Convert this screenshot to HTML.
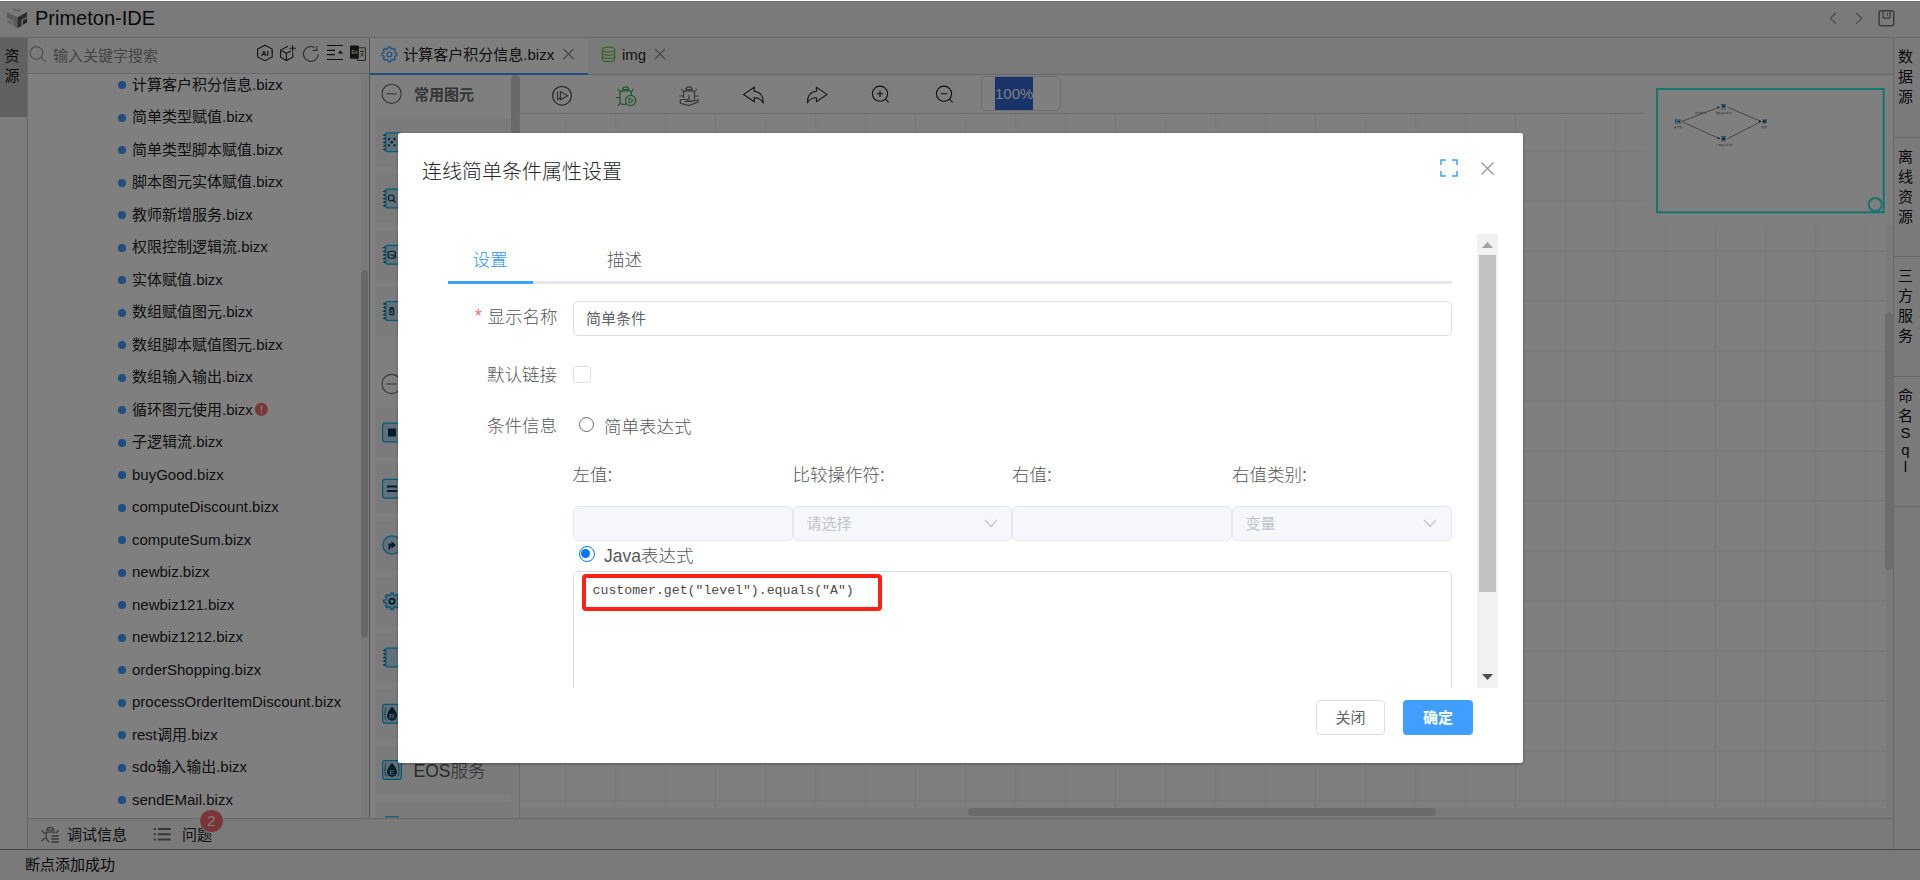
<!DOCTYPE html>
<html lang="zh-CN">
<head>
<meta charset="utf-8">
<title>Primeton-IDE</title>
<style>
*{box-sizing:border-box;margin:0;padding:0}
html,body{width:1920px;height:880px;overflow:hidden;background:#fff}
body{font-family:"Liberation Sans","Noto Sans CJK SC",sans-serif;color:#1a1a1a;position:relative;font-size:15px}
.abs{position:absolute}
svg{display:block;overflow:visible}
/* ---------- app shell ---------- */
#app{position:absolute;left:0;top:0;width:1920px;height:880px;background:#fff}
#hdr{left:0;top:1px;width:1920px;height:37px;background:#f5f5f5;border-top:1px solid #d6d6d6;border-bottom:1px solid #d2d2d2}
#hdr .ttl{left:35px;top:2.3px;font-size:20px;line-height:28px;color:#111;white-space:nowrap}
#lstrip{left:0;top:38px;width:28px;height:811px;background:#f8f8f8;border-right:1px solid #d0d0d0}
#lstrip .act{left:0;top:0;width:27px;height:79px;background:#c2c2c2}
.vtxt{width:24px;text-align:center;font-size:15px;line-height:20px;color:#111}
#rstrip{left:1893px;top:38px;width:27px;height:811px;background:#f5f5f5;border-left:1px solid #d0d0d0}
#rstrip .sec{position:relative;width:26px;padding:9px 0 29.500px 0;border-bottom:1px solid #d0d0d0}
#rstrip .sec div{padding-right:3px;height:20px;line-height:20px;text-align:center;font-size:15px;color:#111}
#rstrip .sec div.l{height:17px;line-height:17px}
/* left panel */
#lp{left:28px;top:38px;width:342px;height:780px;background:#fff;border-right:1px solid #aeaeae;overflow:hidden}
#srch{left:0;top:0;width:341px;height:36px;background:#f7f7f7;border-bottom:1px solid #d0d0d0}
#srch .ph{left:25px;top:7.7px;font-size:15px;line-height:20px;color:#8a8a8a;white-space:nowrap}
.ti{position:absolute;left:0;width:333px;height:32.5px;white-space:nowrap}
.ti i{position:absolute;left:90px;top:12.700px;width:7.600px;height:7.600px;border-radius:50%;background:#409eff}
.ti span{position:absolute;left:104px;top:5px;font-size:15px;line-height:22px;color:#222}
#tsb{left:333px;top:36px;width:8px;height:744px;background:#f4f4f4}
#tsb b{position:absolute;left:0.200px;top:196px;width:7.300px;height:368px;border-radius:3.500px;background:#d0d0d0}
/* tab bar */
#tabs{left:370px;top:38px;width:1523px;height:37px;background:#f5f5f5;border-bottom:1px solid #d0d0d0}
#tabs .t1{left:0;top:0;width:218px;height:36.500px;background:#fff;border-bottom:2.500px solid #409eff}
#tabs .lbl{font-size:15px;line-height:20px;color:#222;white-space:nowrap}
/* palette */
#pal{left:370px;top:75px;width:150px;height:743px;background:#fff;overflow:hidden}
.ph2{position:absolute;left:44px;font-size:15px;font-weight:bold;color:#6a6a6a;line-height:20px;white-space:nowrap}
.card{position:absolute;left:5.800px;width:135.200px;height:49px;background:#f6f6f6}
.card .nm{position:absolute;left:37.700px;top:13px;font-size:17.5px;line-height:24px;color:#505256;white-space:nowrap;font-weight:300}
#psb{left:141px;top:0;width:9px;height:743px;background:#f6f6f6}
#psb b{position:absolute;left:0;top:0;width:9px;height:480px;border-radius:4.5px;background:#d2d2d2}
/* canvas */
#tb{left:520px;top:75px;width:1373px;height:39px;background:#fff;border-bottom:1px solid #d8d8d8}
#cv{left:520px;top:114px;width:1373px;height:704px;background-color:#fff;
 background-image:linear-gradient(to right,#f5f5f5 2px,transparent 2px),linear-gradient(to bottom,#f5f5f5 2px,transparent 2px);
 background-size:50px 50px;background-position:44.500px 36px}
#zoom{left:461px;top:1px;width:80px;height:35px;border:1px solid #dcdfe6;border-radius:5px;background:#fff}
#zoom span{position:absolute;left:13px;top:0;width:38px;height:33px;background:#3367d6;color:#fff;font-size:15px;line-height:33px;white-space:nowrap;overflow:hidden}
/* bottom */
#bbar{left:28px;top:818px;width:1865px;height:31px;background:#f5f5f5;border-top:1px solid #d0d0d0}
#sbar{left:0;top:849px;width:1920px;height:31px;background:#f4f4f4;border-top:1px solid #8c8c8c}
#sbar span{position:absolute;left:25px;top:5px;font-size:15px;line-height:20px;color:#111}
#bbar .lb{position:absolute;top:6px;font-size:15px;line-height:20px;color:#222;white-space:nowrap}
#badge{left:170.750px;top:-10.150px;width:25.500px;height:23.800px;border-radius:12px;background:#f56c6c;border:1.250px solid #fff;color:#fff;font-size:15px;line-height:21.300px;text-align:center}
/* mask & modal */
#mask{left:0;top:0;width:1920px;height:880px;background:rgba(0,0,0,.5)}
#dlg{left:398px;top:132.800px;width:1125.200px;height:630px;background:#fff;border-radius:2px;box-shadow:0 1px 3px rgba(0,0,0,.35)}
#dlg .title{left:24px;top:24px;font-size:20px;line-height:28px;color:#26282b;white-space:nowrap;font-weight:300}
.flabel{position:absolute;font-size:17.5px;line-height:24px;color:#55575b;white-space:nowrap;font-weight:300}
.inp{position:absolute;border:1px solid #dcdfe6;border-radius:5px;background:#fff}
.dis{background:#f5f7fa;border-color:#e4e7ed}
</style>
</head>
<body>

<div id="app">
<!-- HEADER -->
<div id="hdr" class="abs">
    <div class="ttl abs">Primeton-IDE</div>
</div>
<!-- LEFT STRIP -->
<div id="lstrip" class="abs">
  <div class="act abs"></div>
  <div class="vtxt abs" style="left:0;top:8px">资<br>源</div>
</div>
<!-- LEFT PANEL -->
<div id="lp" class="abs">
  <div id="srch" class="abs"><div class="ph abs">输入关键字搜索</div></div>
  <div id="tree">
<div class="ti" style="top:30.75px"><i></i><span>计算客户积分信息.bizx</span></div>
<div class="ti" style="top:63.25px"><i></i><span>简单类型赋值.bizx</span></div>
<div class="ti" style="top:95.75px"><i></i><span>简单类型脚本赋值.bizx</span></div>
<div class="ti" style="top:128.25px"><i></i><span>脚本图元实体赋值.bizx</span></div>
<div class="ti" style="top:160.75px"><i></i><span>教师新增服务.bizx</span></div>
<div class="ti" style="top:193.25px"><i></i><span>权限控制逻辑流.bizx</span></div>
<div class="ti" style="top:225.75px"><i></i><span>实体赋值.bizx</span></div>
<div class="ti" style="top:258.25px"><i></i><span>数组赋值图元.bizx</span></div>
<div class="ti" style="top:290.75px"><i></i><span>数组脚本赋值图元.bizx</span></div>
<div class="ti" style="top:323.25px"><i></i><span>数组输入输出.bizx</span></div>
<div class="ti" style="top:355.75px"><i></i><span>循环图元使用.bizx</span></div>
<div class="ti" style="top:388.25px"><i></i><span>子逻辑流.bizx</span></div>
<div class="ti" style="top:420.75px"><i></i><span>buyGood.bizx</span></div>
<div class="ti" style="top:453.25px"><i></i><span>computeDiscount.bizx</span></div>
<div class="ti" style="top:485.75px"><i></i><span>computeSum.bizx</span></div>
<div class="ti" style="top:518.25px"><i></i><span>newbiz.bizx</span></div>
<div class="ti" style="top:550.75px"><i></i><span>newbiz121.bizx</span></div>
<div class="ti" style="top:583.25px"><i></i><span>newbiz1212.bizx</span></div>
<div class="ti" style="top:615.75px"><i></i><span>orderShopping.bizx</span></div>
<div class="ti" style="top:648.25px"><i></i><span>processOrderItemDiscount.bizx</span></div>
<div class="ti" style="top:680.75px"><i></i><span>rest调用.bizx</span></div>
<div class="ti" style="top:713.25px"><i></i><span>sdo输入输出.bizx</span></div>
<div class="ti" style="top:745.75px"><i></i><span>sendEMail.bizx</span></div>
</div>
  <div id="tsb" class="abs"><b></b></div>
</div>
<!-- TABS -->
<div id="tabs" class="abs">
  <div class="t1 abs"></div>
  <div class="lbl abs" style="left:33.300px;top:7px">计算客户积分信息.bizx</div>
  <div class="lbl abs" style="left:252px;top:7px">img</div>
</div>
<!-- PALETTE -->
<div id="pal" class="abs">
  <div class="ph2" style="top:10px">常用图元</div>
  <div class="ph2" style="top:299px">基础图元</div>
  <div id="cards">
<div class="card" style="top:43.00px"><span class="nm">命名SQL</span></div>
<div class="card" style="top:99.25px"><span class="nm">查询实体</span></div>
<div class="card" style="top:155.50px"><span class="nm">保存实体</span></div>
<div class="card" style="top:211.75px"><span class="nm">删除实体</span></div>
<div class="card" style="top:333.00px"><span class="nm">开始</span></div>
<div class="card" style="top:389.25px"><span class="nm">结束</span></div>
<div class="card" style="top:445.50px"><span class="nm">循环</span></div>
<div class="card" style="top:501.75px"><span class="nm">运算逻辑</span></div>
<div class="card" style="top:558.00px"><span class="nm">逻辑流</span></div>
<div class="card" style="top:614.25px"><span class="nm">Restful服务</span></div>
<div class="card" style="top:670.50px"><span class="nm">EOS服务</span></div>
<div class="card" style="top:726.75px"><span class="nm">WebService</span></div>
</div>
  <div id="psb" class="abs"><b></b></div>
</div>
<!-- TOOLBAR + CANVAS -->
<div id="tb" class="abs">
  <div id="zoom" class="abs"><span>100%</span></div>
</div>
<div class="abs" style="left:519px;top:114px;width:1px;height:704px;background:#d9d9d9"></div>
<div id="cv" class="abs"><div class="abs" style="left:0;top:694px;width:1373px;height:10px;background:#f4f4f4"></div><div class="abs" style="left:1365.500px;top:0;width:7.500px;height:704px;background:#f4f4f4"></div><div class="abs" style="left:448px;top:694px;width:468px;height:8px;border-radius:4px;background:#d6d6d6"></div><div class="abs" style="left:1365px;top:198px;width:8px;height:258px;border-radius:4px;background:#dadada"></div></div>
<!-- RIGHT STRIP -->
<div id="rstrip" class="abs">
  <div class="sec"><div>数</div><div>据</div><div>源</div></div>
  <div class="sec"><div>离</div><div>线</div><div>资</div><div>源</div></div>
  <div class="sec"><div>三</div><div>方</div><div>服</div><div>务</div></div>
  <div class="sec"><div>命</div><div>名</div><div class="l" style="margin-top:-2px">S</div><div class="l">q</div><div class="l" style="margin-bottom:2px">l</div></div>
</div>
<!-- BOTTOM -->
<div id="bbar" class="abs">
  <div class="lb" style="left:39px">调试信息</div>
  <div class="lb" style="left:154px">问题</div>
  <div id="badge" class="abs">2</div>
</div>
<div id="sbar" class="abs"><span>断点添加成功</span></div>
<svg class="abs" style="left:0;top:0;pointer-events:none" width="1920" height="880" viewBox="0 0 1920 880" fill="none" stroke-linecap="butt">
<!-- logo -->
<g stroke="none">
<polygon points="7,12.2 17.5,17.2 17.5,28.3 13.3,26 13.3,21 7,17.8" fill="#b6b6b6"/>
<polygon points="7.2,19.2 12.3,21.7 12.3,25.3 7.2,22.8" fill="#cfcfcf"/>
<polygon points="17.5,17.2 27,12 27,17 21.5,20 21.5,26 17.5,28.3" fill="#565656"/>
<polygon points="22.8,20.6 27,18.3 27,22.6 22.8,24.9" fill="#4a4a4a"/>
<polyline points="13,8.6 17.3,11 20.8,9" fill="none" stroke="#bdbdbd" stroke-width="1.6"/>
</g>
<!-- search -->
<g stroke="#9a9a9a" stroke-width="1.1"><circle cx="36.4" cy="52.9" r="6.3"/><path d="M40.9 57.4L45.8 61.8"/></g>
<!-- AI hexagon -->
<g stroke="#2a2a2a" stroke-width="1.1"><path d="M264.9 45.2L272.2 49.1V56.9L264.9 60.7L257.6 56.9V49.1Z" stroke-dasharray="none"/>
<path d="M271 51.5l1.2 1.6 1.2-1.6zM256.4 54.3l1.2-1.6 1.2 1.6z" fill="#2a2a2a" stroke="none"/></g>
<text x="264.9" y="55.8" text-anchor="middle" font-family="Liberation Sans,sans-serif" font-weight="bold" font-size="7.6" fill="#2a2a2a" stroke="none">AI</text>
<!-- cube plus -->
<g stroke="#2a2a2a" stroke-width="1.1"><path d="M288 46.2L280.6 50V57.2L286.4 60.5L292.8 57.2V52.5M280.6 50L286.4 53.3L291 51M286.4 53.3V60.5"/><path d="M292.6 45.2V51.4M289.4 48.3H295.9"/></g>
<!-- refresh -->
<g stroke="#555" stroke-width="1.1"><path d="M318.2 54A7.4 7.4 0 1 1 314.6 47.6"/><path d="M316.8 46.2V50.4H312.8"/></g>
<!-- collapse lines -->
<g stroke="#1e1e1e" stroke-width="1.2"><path d="M327 45.5H343M327 50.3H335M327 54.6H335M327 59.5H343"/><path d="M337.8 53.6L340.5 50.4L343.2 53.6Z" fill="#1e1e1e" stroke="none"/></g>
<!-- translate -->
<g><rect x="350" y="45.5" width="8.8" height="13.2" rx="1" fill="#262626"/><rect x="357.7" y="47.8" width="7.6" height="12.7" stroke="#3a3a3a" stroke-width="0.9"/><path d="M360 51.5h4M362 50.3v1.2M360.6 56.5l2.6-4M361 53l2.6 3.4" stroke="#3a3a3a" stroke-width="0.8"/>
<text x="354.4" y="54" text-anchor="middle" font-family="Liberation Sans,sans-serif" font-weight="bold" font-size="4.6" fill="#e8e8e8" stroke="none">En</text></g>
</svg>
<svg class="abs" style="left:0;top:0;pointer-events:none" width="1920" height="880" viewBox="0 0 1920 880" fill="none">
<!-- tab gear -->
<g stroke="#409eff" stroke-width="1.2" stroke-linejoin="round"><path d="M387.98 48.67L388.15 46.90L390.65 46.90L390.82 48.67L392.44 49.35L393.82 48.22L395.58 49.98L394.45 51.36L395.13 52.98L396.90 53.15L396.90 55.65L395.13 55.82L394.45 57.44L395.58 58.82L393.82 60.58L392.44 59.45L390.82 60.13L390.65 61.90L388.15 61.90L387.98 60.13L386.36 59.45L384.98 60.58L383.22 58.82L384.35 57.44L383.67 55.82L381.90 55.65L381.90 53.15L383.67 52.98L384.35 51.36L383.22 49.98L384.98 48.22L386.36 49.35Z"/><circle cx="389.4" cy="54.4" r="2.4"/></g>
<!-- tab close -->
<path d="M563.5 49l10 10M573.5 49l-10 10" stroke="#8a8c92" stroke-width="1.1"/>
<path d="M655 49l10 10M665 49l-10 10" stroke="#8a8c92" stroke-width="1.1"/>
<!-- db icon -->
<g stroke="#72cc46" stroke-width="1.2"><ellipse cx="608.5" cy="49.6" rx="6.2" ry="2.5"/><path d="M602.3 49.6V59.2C602.3 60.6 605 61.7 608.5 61.7S614.7 60.6 614.7 59.2V49.6"/><path d="M602.3 52.8C602.3 54.2 605 55.3 608.5 55.3S614.7 54.2 614.7 52.8M602.3 56C602.3 57.4 605 58.5 608.5 58.5S614.7 57.4 614.7 56"/></g>
<!-- header right -->
<path d="M1835.8 13L1830.4 18.35L1835.8 23.7M1856.1 13L1861.9 18.35L1856.1 23.7" stroke="#8c8c8c" stroke-width="1.1"/>
<g stroke="#767676" stroke-width="1.5"><rect x="1879.1" y="10.8" width="14.7" height="15" rx="2"/><path d="M1883 11V16.2A2 2 0 0 0 1885 18.2H1888A2 2 0 0 0 1890 16.2V11" stroke-width="1.3"/><path d="M1887.4 12.8V15.8" stroke-width="1"/></g>
<!-- palette heading minus -->
<g stroke="#6a6a6a" stroke-width="1.1"><circle cx="391.6" cy="93.8" r="9.6"/><path d="M386.5 93.8H396.7"/><circle cx="391.6" cy="384" r="9.6"/><path d="M386.5 384H396.7"/></g>
<!-- toolbar: ff -->
<g stroke="#5a5a5a" stroke-width="1.3"><circle cx="562" cy="95.7" r="9.4"/><path d="M557.6 91.8V99.6L560.2 97.8M560.4 91.6V99.8L567.6 95.7Z" stroke-width="1.1"/></g>
<!-- green bug -->
<g stroke="#40b054" stroke-width="1.2"><path d="M622.6 89.6A3.2 3.2 0 0 1 628.9 89.6Z"/><path d="M626 104.4H622.5A2.5 2.5 0 0 1 620 101.9V93.4A2.5 2.5 0 0 1 622.500 90.900H629A2.500 2.500 0 0 1 631.500 93.400V95"/><path d="M616 97.600H620M617.800 89L620.300 92M633.600 89L631.300 92M617.800 105.800L620.800 102.300"/><circle cx="630.6" cy="100.500" r="5.1"/><path d="M629 98V103L633.300 100.500Z" stroke-width="1"/></g>
<!-- gray bug hand -->
<g stroke="#6c6c6c" stroke-width="1.2"><path d="M685.800 89.600A3.200 3.200 0 0 1 692.100 89.600Z"/><path d="M683.500 98V93.400A2.500 2.500 0 0 1 686 90.900H692A2.500 2.500 0 0 1 694.500 93.400V99.500"/><path d="M679.300 96H683.300M694.700 96H698.700M681.300 89L683.700 92M696.800 89L694.500 92"/><path d="M689 95V101.500H684.500M680.300 99.500H687.500V101.500M680.300 99.500V103.300L688.800 105.600L698 102V100L689.500 101.600"/></g>
<!-- undo / redo -->
<path d="M743.6 94.4L754.2 87.3V91.300C760 91.800 763.400 96 763.200 103.200C761.500 99.500 758.500 97.800 754.200 97.800V101.600Z" stroke="#1c1c1c" stroke-width="1.1" stroke-linejoin="miter"/>
<path transform="translate(1570.600 0) scale(-1 1)" d="M743.6 94.4L754.2 87.3V91.300C760 91.800 763.400 96 763.200 103.200C761.500 99.500 758.500 97.800 754.200 97.800V101.600Z" stroke="#303030" stroke-width="1.1"/>
<!-- zoom in/out -->
<g stroke="#1c1c1c" stroke-width="1.1"><circle cx="880" cy="93.700" r="7.6"/><path d="M885.400 99.100L888.600 102.300M876.800 93.700H883.200M880 90.500V96.900"/><circle cx="944" cy="93.700" r="7.600"/><path d="M949.400 99.100L952.600 102.300M940.800 93.700H947.200"/></g>
</svg>
<svg class="abs" style="left:0;top:0;pointer-events:none" width="1920" height="880" viewBox="0 0 1920 880" fill="none">
<!-- palette group 1 chips -->
<g transform="translate(382 132.200)"><g stroke="none" fill="#0b668c"><path d="M3.700 1.300V4.300L0.300 3.000ZM3.700 4.900V7.900L0.300 6.600ZM3.700 8.500V11.500L0.300 10.200ZM3.700 12.100V15.100L0.300 13.800ZM3.700 15.700V18.700L0.300 17.400Z"/></g>
<rect x="3.900" y="0.600" width="15.500" height="18.800" rx="1.200" fill="#c3e3f5" stroke="#10b0f0" stroke-width="1.200"/><g transform="translate(-1.400 0)" stroke="#063a52" stroke-width="1.200"><path d="M8 8.200V6.500H9.700M12.600 6.500H14.300V8.200M14.300 11.800V13.500H12.600M9.700 13.500H8V11.800"/><circle cx="11.150" cy="10" r="1.300" fill="#063a52" stroke="none"/></g></g>
<g transform="translate(382 188.500)"><g stroke="none" fill="#0b668c"><path d="M3.700 1.300V4.300L0.300 3.000ZM3.700 4.900V7.900L0.300 6.600ZM3.700 8.500V11.500L0.300 10.200ZM3.700 12.100V15.100L0.300 13.800ZM3.700 15.700V18.700L0.300 17.400Z"/></g>
<rect x="3.900" y="0.600" width="15.500" height="18.800" rx="1.200" fill="#c3e3f5" stroke="#10b0f0" stroke-width="1.200"/><g transform="translate(-1.400 0)" stroke="#063a52" stroke-width="1.100"><circle cx="10.600" cy="9.400" r="2.900"/><path d="M12.700 11.600L15 14"/></g></g>
<g transform="translate(382 244.800)"><g stroke="none" fill="#0b668c"><path d="M3.700 1.300V4.300L0.300 3.000ZM3.700 4.900V7.900L0.300 6.600ZM3.700 8.500V11.500L0.300 10.200ZM3.700 12.100V15.100L0.300 13.800ZM3.700 15.700V18.700L0.300 17.400Z"/></g>
<rect x="3.900" y="0.600" width="15.500" height="18.800" rx="1.200" fill="#c3e3f5" stroke="#10b0f0" stroke-width="1.200"/><g transform="translate(-1.400 0)" stroke="#063a52" stroke-width="1.100"><path d="M7.600 7.400Q11.200 5.600 14.800 7.400V12.600Q11.200 14.400 7.600 12.600Z"/><path d="M9 10.200H13.400V13"/></g></g>
<g transform="translate(382 301)"><g stroke="none" fill="#0b668c"><path d="M3.700 1.300V4.300L0.300 3.000ZM3.700 4.900V7.900L0.300 6.600ZM3.700 8.500V11.500L0.300 10.200ZM3.700 12.100V15.100L0.300 13.800ZM3.700 15.700V18.700L0.300 17.400Z"/></g>
<rect x="3.900" y="0.600" width="15.500" height="18.800" rx="1.200" fill="#c3e3f5" stroke="#10b0f0" stroke-width="1.200"/><g transform="translate(-1.400 0)" stroke="#063a52" stroke-width="1.100"><path d="M8.600 8H13.800M9.300 8V13.600H13.100V8M10.200 8V6.600H12.200V8M11.200 9.600V12"/></g></g>
<!-- group 2 -->
<g transform="translate(382 422.500)"><rect x="0.600" y="0.600" width="18.800" height="18.800" rx="2.400" fill="#c3e3f5" stroke="#10b0f0" stroke-width="1.200"/><rect x="6" y="6" width="8" height="8" fill="#073c55"/></g>
<g transform="translate(382 478.800)"><rect x="0.600" y="0.600" width="18.800" height="18.800" rx="2.400" fill="#c3e3f5" stroke="#10b0f0" stroke-width="1.200"/><path d="M5 7.700H15M5 12.300H15" stroke="#073c55" stroke-width="2"/></g>
<g transform="translate(382 535)"><circle cx="10" cy="10" r="9.200" fill="#c3e3f5" stroke="#10b0f0" stroke-width="1.200"/><path d="M6.500 8.500H9.500V6.200L13.800 10L9.500 13.600V11.500H8.300V14.500H6.500Z" fill="#073c55"/></g>
<g transform="translate(392 601.300)"><path d="M-1.52 -6.11L-1.36 -8.19L1.36 -8.19L1.52 -6.11L3.25 -5.40L4.83 -6.75L6.75 -4.83L5.40 -3.25L6.11 -1.52L8.19 -1.36L8.19 1.36L6.11 1.52L5.40 3.25L6.75 4.83L4.83 6.75L3.25 5.40L1.52 6.11L1.36 8.19L-1.36 8.19L-1.52 6.11L-3.25 5.40L-4.83 6.75L-6.75 4.83L-5.40 3.25L-6.11 1.52L-8.19 1.36L-8.19 -1.36L-6.11 -1.52L-5.40 -3.25L-6.75 -4.83L-4.83 -6.75L-3.25 -5.40Z" fill="#c3e3f5" stroke="#10a0d8" stroke-width="1.300" stroke-linejoin="round"/><circle r="2.600" stroke="#073c55" stroke-width="1.800"/></g>
<g transform="translate(382 647.500)"><g stroke="none" fill="#0b668c"><path d="M3.700 1.300V4.300L0.300 3.000ZM3.700 4.900V7.900L0.300 6.600ZM3.700 8.500V11.500L0.300 10.200ZM3.700 12.100V15.100L0.300 13.800ZM3.700 15.700V18.700L0.300 17.400Z"/></g>
<rect x="3.900" y="0.600" width="15.500" height="18.800" rx="1.200" fill="#c3e3f5" stroke="#10b0f0" stroke-width="1.200"/></g>
<g transform="translate(382 703.800)"><rect x="0.600" y="0.600" width="18.800" height="18.800" rx="2.400" fill="#c3e3f5" stroke="#10b0f0" stroke-width="1.200"/><path d="M10 2.800C13.300 6.700 15 9.400 15 11.900A5 5 0 0 1 5 11.900C5 9.400 6.700 6.700 10 2.800Z" fill="#073c55"/><path d="M4.600 4Q3.200 4 3.200 5.500V8.500Q3.200 10 2.200 10Q3.200 10 3.200 11.500V14.500Q3.200 16 4.600 16M15.400 4Q16.800 4 16.800 5.500V8.500Q16.800 10 17.800 10Q16.800 10 16.800 11.500V14.500Q16.800 16 15.400 16" stroke="#0b5878" stroke-width="0.800"/><text x="10" y="15" text-anchor="middle" font-family="Liberation Sans,sans-serif" font-size="8" fill="#cfe8f6" stroke="none">R</text></g>
<g transform="translate(382 760)"><rect x="0.600" y="0.600" width="18.800" height="18.800" rx="2.400" fill="#c3e3f5" stroke="#10b0f0" stroke-width="1.200"/><path d="M10 2.800C13.300 6.700 15 9.400 15 11.900A5 5 0 0 1 5 11.900C5 9.400 6.700 6.700 10 2.800Z" fill="#073c55"/><path d="M4.600 4Q3.200 4 3.200 5.500V8.500Q3.200 10 2.200 10Q3.200 10 3.200 11.500V14.500Q3.200 16 4.600 16M15.400 4Q16.800 4 16.800 5.500V8.500Q16.800 10 17.800 10Q16.800 10 16.800 11.500V14.500Q16.800 16 15.400 16" stroke="#0b5878" stroke-width="0.800"/><text x="10" y="15" text-anchor="middle" font-family="Liberation Sans,sans-serif" font-size="8" fill="#cfe8f6" stroke="none">E</text></g>
<g transform="translate(382 816.200)"><path d="M3 0.600H17" stroke="#10b0f0" stroke-width="1.200"/></g>
<!-- bottom bar icons -->
<g stroke="#7a7a7a" stroke-width="1.300"><path d="M46.800 830.200A3.600 3.600 0 0 1 53.800 830.200Z"/><path d="M49.500 842.200C47.400 841 46.300 838.800 46.300 836V832.200H54.400V833.500"/><path d="M41.500 830.300L44.300 833.200H46.300M41.500 841.300L44.300 838.300H46.300M58.600 830.300L56 833"/></g>
<path d="M51.400 836H58.800M51.400 839H58.800M51.400 842H58.800" stroke="#6e6e6e" stroke-width="1.700"/>
<g stroke="#6a6a6a" stroke-width="2"><path d="M153.700 829H155.800M157.800 829H170.600M153.700 834.200H155.800M157.800 834.200H170.600M153.700 839.400H155.800M157.800 839.400H170.600"/></g>
<!-- tree error badge -->
<circle cx="261.400" cy="409.300" r="6.500" fill="#f56c6c"/>
<path d="M261.400 405.400V410.600M261.400 412V413.300" stroke="#fff" stroke-width="1.400"/>
</svg>
<svg class="abs" style="left:0;top:0;pointer-events:none" width="1920" height="880" viewBox="0 0 1920 880" fill="none">
<rect x="1643.500" y="75" width="249.500" height="149.500" fill="#fff"/>
<rect x="1657.100" y="89" width="226.600" height="123.300" stroke="#28ecdc" stroke-width="2" fill="#fff"/>
<circle cx="1875.200" cy="204.600" r="6.600" stroke="#28ecdc" stroke-width="2" fill="#fff"/>
<g stroke="#444" stroke-width="0.600"><path d="M1681.800 121.400L1719.400 107.200M1681.800 121.600L1719.400 138.600M1727.200 107L1760.600 121.200M1727.200 138.800L1760.600 121.800"/></g>
<g fill="#1e1e1e"><path d="M1719.800 107L1717.400 106.400L1717.900 108.400ZM1720 138.800L1717.400 139.200L1718.600 137ZM1761.400 121.500L1759.200 120.200V122.800Z"/></g>
<g><rect x="1675" y="119" width="6" height="4.800" fill="#9ccbe6"/><rect x="1675" y="119" width="0.800" height="4.800" fill="#2a8ec4"/><rect x="1677.600" y="120.800" width="2.400" height="1.200" fill="#0a3850"/>
<rect x="1721" y="104" width="5" height="5.800" fill="#9ccbe6"/><rect x="1721" y="104" width="5" height="0.700" fill="#2a8ec4"/><rect x="1722.200" y="105.600" width="2.800" height="1.400" fill="#0a3850"/>
<rect x="1721" y="136" width="5" height="5.800" fill="#9ccbe6"/><rect x="1721" y="136" width="5" height="0.700" fill="#2a8ec4"/><rect x="1722.200" y="137.800" width="2.800" height="2" fill="#0a3850"/>
<rect x="1762" y="119" width="5" height="4.800" fill="#9ccbe6"/><rect x="1763" y="120.400" width="3" height="2" fill="#0a3850"/>
<rect x="1674.200" y="126.800" width="1.600" height="1.600" fill="#e23c3c"/></g>
<g font-family="Liberation Sans,Noto Sans CJK SC,sans-serif" fill="#6a6a6a" font-size="2.800">
<text x="1695" y="113.800">简单条件</text><text x="1716" y="114.200">A级客户折扣</text><text x="1715.500" y="146">一般客户折扣</text><text x="1761.500" y="128">结束</text><text x="1676.500" y="128">开始</text></g>
</svg>
</div>
<!-- MASK -->
<div id="mask" class="abs"></div>
<div class="abs" style="left:0;top:0;width:1920px;height:1px;background:#fff"></div>
<!-- DIALOG -->
<div id="dlg" class="abs"><div class="abs" style="left:0;top:0.200px;width:1125px;height:629px">
  <div class="title abs" style="top:25px">连线简单条件属性设置</div>
  <svg class="abs" style="left:1042px;top:26px" width="18" height="18" viewBox="0 0 18 18" fill="none" stroke="#409eff" stroke-width="1.5"><path d="M1 6V1h5M12 1h5v5M17 12v5h-5M6 17H1v-5"/></svg>
  <svg class="abs" style="left:1083px;top:29px" width="13" height="13" viewBox="0 0 13 13" fill="none" stroke="#8f9196" stroke-width="1.2"><path d="M0.5 0.5l12 12M12.5 0.5l-12 12"/></svg>
  <!-- tabs -->
  <div class="abs" style="left:50px;top:148px;width:1004px;height:3px;background:#e4e7ed"></div>
  <div class="abs" style="left:50px;top:148px;width:85px;height:3px;background:#409eff"></div>
  <div class="abs" style="left:74.5px;top:114px;font-size:17.5px;line-height:26px;color:#2f92fb;white-space:nowrap;font-weight:300">设置</div>
  <div class="abs" style="left:209px;top:114px;font-size:17.5px;line-height:26px;color:#55575b;white-space:nowrap;font-weight:300">描述</div>
  <!-- row 1 -->
  <div class="flabel" style="left:77px;top:171.5px;color:#f56c6c">*</div>
  <div class="flabel" style="left:89.5px;top:172px">显示名称</div>
  <div class="inp" style="left:175px;top:168px;width:879px;height:35px"><span class="abs" style="left:12px;top:6px;font-size:15px;line-height:21px;color:#606266;white-space:nowrap">简单条件</span></div>
  <!-- row 2 -->
  <div class="flabel" style="left:89px;top:230.5px">默认链接</div>
  <div class="abs" style="left:175px;top:233px;width:17.5px;height:17.5px;border:1px solid #dcdfe6;border-radius:2.5px;background:#fff"></div>
  <!-- row 3 -->
  <div class="flabel" style="left:89px;top:281.5px">条件信息</div>
  <div class="abs" style="left:181px;top:284.2px;width:15px;height:15px;border:1.3px solid #6b6b6b;border-radius:50%;background:#fff"></div>
  <div class="flabel" style="left:206px;top:282px">简单表达式</div>
  <!-- row 4 labels -->
  <div class="flabel" style="left:174.5px;top:330.5px">左值:</div>
  <div class="flabel" style="left:394.5px;top:330.5px">比较操作符:</div>
  <div class="flabel" style="left:614px;top:330.5px">右值:</div>
  <div class="flabel" style="left:834px;top:330.5px">右值类别:</div>
  <!-- row 5 inputs -->
  <div class="inp dis" style="left:175px;top:373px;width:219.5px;height:35px"></div>
  <div class="inp dis" style="left:394.5px;top:373px;width:219.5px;height:35px"><span class="abs" style="left:13px;top:6px;font-size:15px;line-height:21px;color:#c0c4cc;white-space:nowrap">请选择</span>
    <svg class="abs" style="left:190.800px;top:12.100px" width="14" height="9" viewBox="0 0 14 9" fill="none" stroke="#c0c4cc" stroke-width="1.2"><path d="M1 1l6 6.5L13 1"/></svg></div>
  <div class="inp dis" style="left:614px;top:373px;width:219.5px;height:35px"></div>
  <div class="inp dis" style="left:833.5px;top:373px;width:220.5px;height:35px"><span class="abs" style="left:13px;top:6px;font-size:15px;line-height:21px;color:#c0c4cc;white-space:nowrap">变量</span>
    <svg class="abs" style="left:190.800px;top:12.100px" width="14" height="9" viewBox="0 0 14 9" fill="none" stroke="#c0c4cc" stroke-width="1.2"><path d="M1 1l6 6.5L13 1"/></svg></div>
  <!-- java radio -->
  <div class="abs" style="left:180.5px;top:413.2px;width:16px;height:16px;border:1.6px solid #0075ff;border-radius:50%;background:#fff"><i class="abs" style="left:1.800px;top:1.800px;width:9.200px;height:9.200px;border-radius:50%;background:#0075ff"></i></div>
  <div class="flabel" style="left:206px;top:411.5px">Java表达式</div>
  <!-- textarea -->
  <div class="abs" style="left:175px;top:438px;width:879px;height:117px;overflow:hidden"><div class="inp" style="left:0;top:0;width:879px;height:140px"></div></div>
  <div class="abs" style="left:184.3px;top:440.800px;width:299.600px;height:37.200px;border:4.100px solid #fd2015;border-radius:4px"></div>
  <div class="abs" style="left:194.600px;top:447.600px;font-family:'Liberation Mono','DejaVu Sans Mono',monospace;font-size:13.200px;line-height:20px;color:#4a4a4a;white-space:pre">customer.get("level").equals("A")</div>
  <!-- scrollbar -->
  <div class="abs" style="left:1079px;top:101px;width:21px;height:454px;background:#f1f1f1"></div>
  <div class="abs" style="left:1081px;top:122px;width:17px;height:337px;background:#c1c1c1"></div>
  <svg class="abs" style="left:1084px;top:109px" width="11" height="6" viewBox="0 0 11 6"><path d="M0 6L5.5 0 11 6z" fill="#a3a3a3"/></svg>
  <svg class="abs" style="left:1084px;top:541px" width="11" height="6" viewBox="0 0 11 6"><path d="M0 0L5.5 6 11 0z" fill="#505050"/></svg>
  <!-- buttons -->
  <div class="abs" style="left:918px;top:567px;width:69px;height:35px;border:1px solid #dcdfe6;border-radius:4px;background:#fff;font-size:15px;line-height:33px;text-align:center;color:#606266">关闭</div>
  <div class="abs" style="left:1005px;top:567px;width:70px;height:35px;border-radius:4px;background:#409eff;font-size:15px;line-height:35px;text-align:center;color:#fff;font-weight:bold">确定</div>
</div></div>
</body>
</html>
